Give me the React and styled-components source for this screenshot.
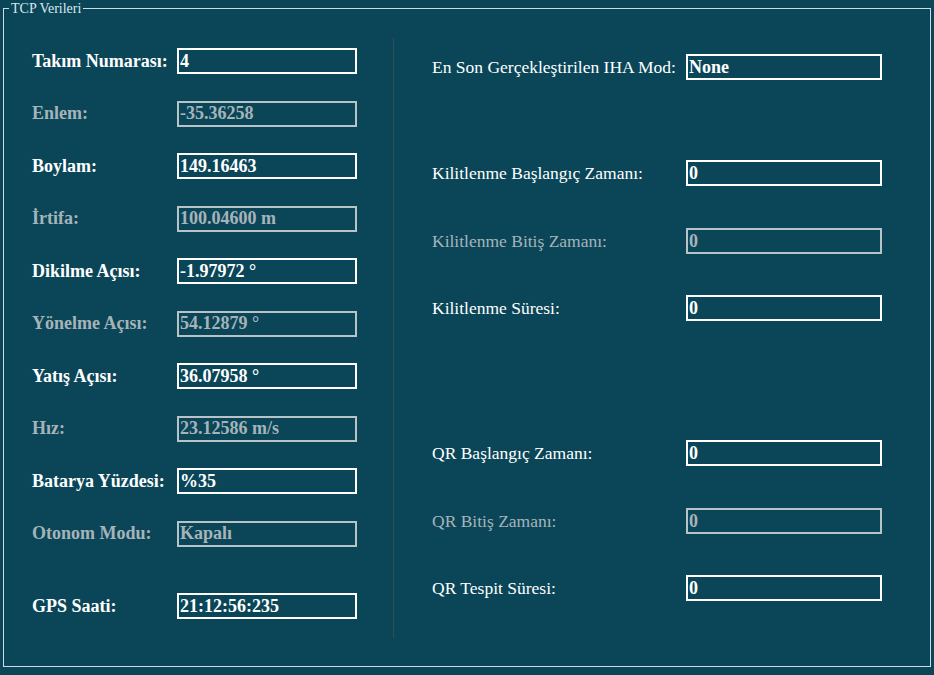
import React from "react";
import styled, { createGlobalStyle } from "styled-components";

const GlobalStyle = createGlobalStyle`
    html, body {
        margin: 0;
        padding: 0;
        background: #0a4658;
        font-family: "Liberation Serif", "Times New Roman", serif;
    }
`

const Page = styled.div`
    width: 934px;
    height: 675px;
    padding: 1px 3px 0 3px;
    box-sizing: border-box;
`

const Frame = styled.fieldset`
    margin: 0;
    padding: 0;
    width: 928px;
    height: 666px;
    box-sizing: border-box;
    border: 1px solid #c9dde2;
    display: flex;
`

const Caption = styled.legend`
    margin-left: 5px;
    padding: 0 2px;
    font-size: 14px;
    line-height: 15px;
    color: #dbe8ec;
`

const LeftColumn = styled.div`
    width: 389px;
    padding: 32px 0 0 28px;
    box-sizing: border-box;
    display: flex;
    flex-direction: column;
`

const RightColumn = styled.div`
    flex: 1;
    padding: 38px 0 0 38px;
    box-sizing: border-box;
    display: flex;
    flex-direction: column;
`

const Divider = styled.div`
    width: 1px;
    height: 600px;
    margin-top: 22px;
    background: #2f4f59;
`

const Row = styled.div`
    display: flex;
    align-items: center;
    height: 26px;
    margin-top: ${p => p.$gap}px;
`

const Label = styled.span`
    width: ${p => p.$width}px;
    flex-shrink: 0;
    font-size: ${p => (p.$bold ? 18 : 17.5)}px;
    font-weight: ${p => (p.$bold ? 700 : 400)};
    color: ${p => (p.$muted ? "#a6b4b9" : "#ffffff")};
    white-space: nowrap;
`

const Value = styled.input`
    width: ${p => p.$width}px;
    height: 26px;
    box-sizing: border-box;
    margin: 0;
    padding: 0 1px;
    background: transparent;
    border: 2px solid ${p => (p.$muted ? "#b7c3c7" : "#ffffff")};
    border-radius: 0;
    outline: none;
    font-family: "Liberation Serif", "Times New Roman", serif;
    font-size: 18px;
    font-weight: 700;
    color: ${p => (p.$muted ? "#a6b4b9" : "#ffffff")};
`

const leftFields = [
    { label: "Takım Numarası:", value: "4" },
    { label: "Enlem:", value: "-35.36258", muted: true },
    { label: "Boylam:", value: "149.16463" },
    { label: "İrtifa:", value: "100.04600 m", muted: true },
    { label: "Dikilme Açısı:", value: "-1.97972 °" },
    { label: "Yönelme Açısı:", value: "54.12879 °", muted: true },
    { label: "Yatış Açısı:", value: "36.07958 °" },
    { label: "Hız:", value: "23.12586 m/s", muted: true },
    { label: "Batarya Yüzdesi:", value: "%35" },
    { label: "Otonom Modu:", value: "Kapalı", muted: true },
    { label: "GPS Saati:", value: "21:12:56:235", gap: 46.5 },
]

const rightFields = [
    { label: "En Son Gerçekleştirilen IHA Mod:", value: "None", gap: 0 },
    { label: "Kilitlenme Başlangıç Zamanı:", value: "0", gap: 80 },
    { label: "Kilitlenme Bitiş Zamanı:", value: "0", gap: 42, muted: true },
    { label: "Kilitlenme Süresi:", value: "0", gap: 41 },
    { label: "QR Başlangıç Zamanı:", value: "0", gap: 119 },
    { label: "QR Bitiş Zamanı:", value: "0", gap: 42, muted: true },
    { label: "QR Tespit Süresi:", value: "0", gap: 41 },
]

const App = () => {
    return (
        <Page>
            <GlobalStyle />
            <Frame>
                <Caption>TCP Verileri</Caption>
                <LeftColumn>
                    {leftFields.map((f, i) => (
                        <Row key={f.label} $gap={i === 0 ? 0 : f.gap || 26.5}>
                            <Label $width={145} $bold $muted={f.muted}>{f.label}</Label>
                            <Value $width={180} $muted={f.muted} value={f.value} readOnly />
                        </Row>
                    ))}
                </LeftColumn>
                <Divider />
                <RightColumn>
                    {rightFields.map(f => (
                        <Row key={f.label} $gap={f.gap}>
                            <Label $width={254} $muted={f.muted}>{f.label}</Label>
                            <Value $width={196} $muted={f.muted} value={f.value} readOnly />
                        </Row>
                    ))}
                </RightColumn>
            </Frame>
        </Page>
    )
}

export default App
